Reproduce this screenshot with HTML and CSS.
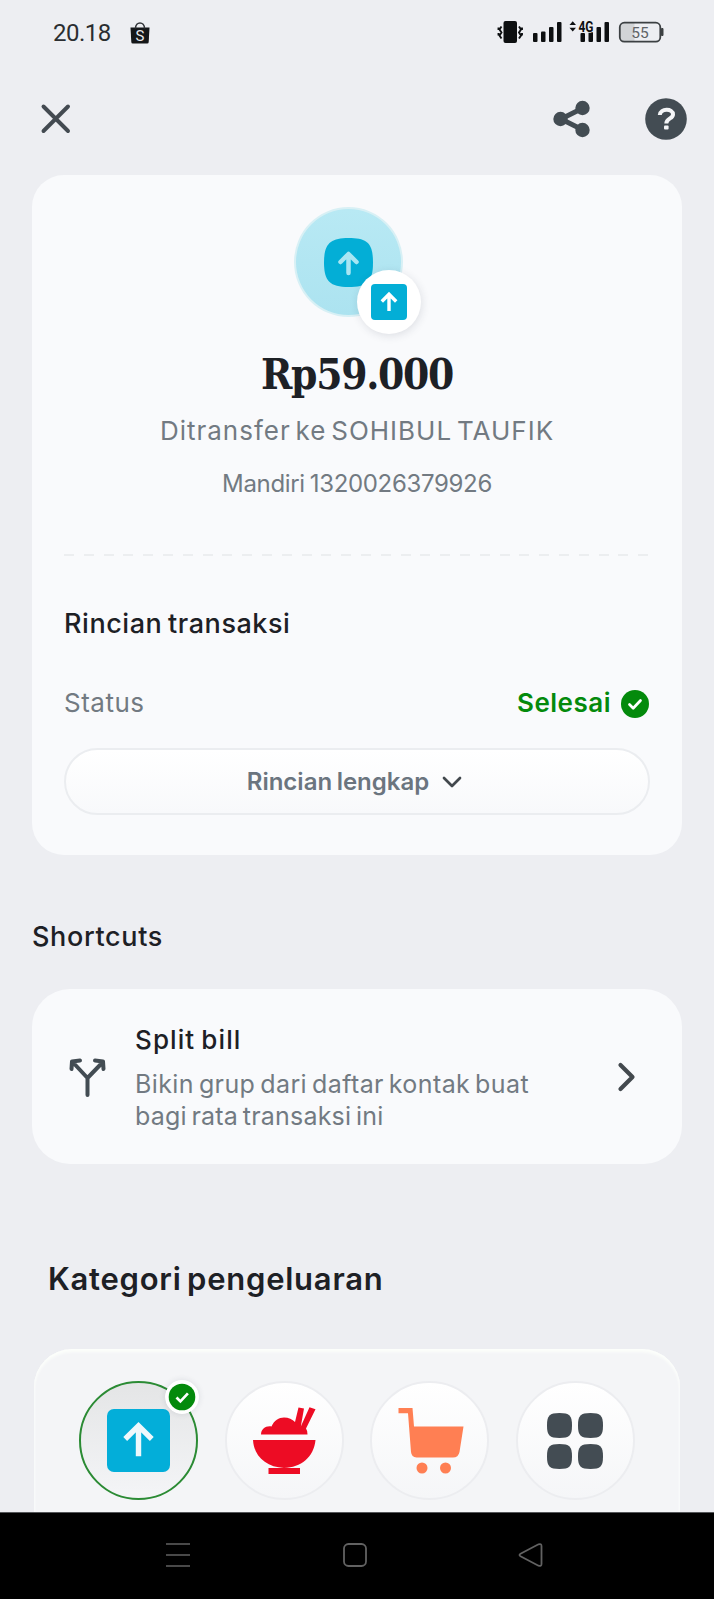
FILE: index.html
```html
<!DOCTYPE html>
<html lang="id">
<head>
<meta charset="utf-8">
<title>Rincian transaksi</title>
<link rel="stylesheet" href="styles.css">
</head>
<body>
<div class="screen">
  <div class="statusbar">
    <span class="clock">20.18</span>
    <svg class="bag" width="20" height="22" viewBox="0 0 20 22"><path d="M0.5 5.5h19l-.8 14.5q-.1 1.500-1.500 1.500h-14.400q-1.400 0-1.500-1.500z" fill="#151719"/><path d="M5.500 6.500C5.500-1 14.500-1 14.500 6.500" fill="none" stroke="#33363a" stroke-width="1.500"/><text class="bag-letter" x="10" y="18.500" text-anchor="middle">S</text></svg>
    <svg class="signals" width="170" height="30" viewBox="0 0 170 30">
      <g fill="#0d0f11">
        <rect x="6.500" y="7" width="13.500" height="22" rx="2"/>
        <rect x="36" y="19" width="4.500" height="9" rx="1"/><rect x="44" y="17.500" width="4.500" height="10.500" rx="1"/><rect x="52" y="13" width="4.500" height="15" rx="1"/><rect x="60" y="8" width="4.500" height="20" rx="1"/>
        <rect x="83.500" y="19" width="4.500" height="9" rx="1"/><rect x="91.500" y="18" width="4.500" height="10" rx="1"/><rect x="99.500" y="13" width="4.500" height="15" rx="1"/><rect x="107.500" y="8" width="4.500" height="20" rx="1"/>
        <path d="M72.500 11l3.200-3.800L79 11zM72.500 13.800h6.500l-3.300 3.800z"/>
      </g>
      <path d="M4.500 12.500l-2 3 2 3-2 3 2 3M1.500 13.500v2.500M1.500 19v2.500M22 12.500l2 3-2 3 2 3-2 3M25 13.500v2.500M25 19v2.500" fill="none" stroke="#0d0f11" stroke-width="1.900"/>
      <text class="net" x="81.500" y="17.500" textLength="15" lengthAdjust="spacingAndGlyphs">4G</text>
      <path d="M126.500 9h11v18h-11q-3.500 0-3.500-3.500v-11q0-3.500 3.500-3.500z" fill="#d2d4d7"/>
      <rect x="122.800" y="8.700" width="40.500" height="19" rx="4.500" fill="none" stroke="#3c4043" stroke-width="1.800"/>
      <path d="M164.500 14.500h1.500v7h-1.500z" fill="#3c4043" stroke="#3c4043"/>
      <text class="batt" x="143" y="23.800" text-anchor="middle">55</text>
    </svg>
  </div>

  <div class="topbar">
    <svg class="close" width="32" height="32" viewBox="0 0 32 32"><path d="M3.500 3.500l24.500 24.500M28 3.500L3.500 28" stroke="#434a51" stroke-width="3.900" stroke-linecap="round"/></svg>
    <svg class="share" width="38" height="38" viewBox="0 0 38 38" fill="#434c53"><path d="M30 8L8 19l22 11" fill="none" stroke="#434c53" stroke-width="5"/><circle cx="29.500" cy="8" r="7.200"/><circle cx="7.500" cy="19" r="7.200"/><circle cx="29.500" cy="30" r="7.200"/></svg>
    <svg class="help" width="42" height="42" viewBox="0 0 42 42"><circle cx="21" cy="21" r="20.800" fill="#434c53"/><path d="M14.800 17C15.200 10.200 28 10 28 16.400C28 20.800 21.500 20 21.300 25.500" fill="none" stroke="#f4f5f7" stroke-width="4"/><rect x="19" y="27.400" width="4.600" height="4" rx="1" fill="#f4f5f7"/></svg>
  </div>

  <main class="content">
    <section class="card receipt">
      <div class="hero">
        <svg class="hero-icon" width="49" height="49" viewBox="0 0 49 49"><path d="M24.500 0C43 0 49 5 49 24.500S43 49 24.500 49 0 43 0 24.500 6 0 24.500 0z" fill="#03aed6"/><path d="M24.500 35V17M16.500 24l8-8 8 8" fill="none" stroke="#a8e6f3" stroke-width="4.500" stroke-linecap="round" stroke-linejoin="round"/></svg>
        <div class="hero-badge"><svg width="36" height="36" viewBox="0 0 36 36"><rect width="36" height="36" rx="4" fill="#03aed6"/><path d="M18 27V11M10.800 17.500L18 10.200l7.200 7.300" fill="none" stroke="#fff" stroke-width="3.400"/></svg></div>
      </div>
      <div class="amount">Rp59.000</div>
      <div class="recipient">Ditransfer ke SOHIBUL TAUFIK</div>
      <div class="account">Mandiri 1320026379926</div>
      <div class="divider"></div>
      <h2 class="heading">Rincian transaksi</h2>
      <div class="row">
        <span class="label">Status</span>
        <span class="done">Selesai</span>
        <svg class="check" width="28" height="28" viewBox="0 0 28 28"><circle cx="14" cy="14" r="14" fill="#048a0c"/><path d="M8.500 14.500l3.700 3.700 7.300-7.700" fill="none" stroke="#fff" stroke-width="2.700" stroke-linecap="round" stroke-linejoin="round"/></svg>
      </div>
      <div class="more"><span class="more-text">Rincian lengkap</span><svg width="20" height="14" viewBox="0 0 20 14"><path d="M2 3l8 8 8-8" fill="none" stroke="#42484d" stroke-width="2.700" stroke-linecap="round" stroke-linejoin="round"/></svg></div>
    </section>

    <h2 class="shortcuts-title">Shortcuts</h2>
    <section class="card shortcut">
      <svg class="split" width="40" height="42" viewBox="0 0 40 42"><path d="M19.500 38V21L6 6.500M19.500 21L33.500 6.500M3.500 12L4 4.500l8-1M35.500 12L35 4.500l-8-1" fill="none" stroke="#434c53" stroke-width="4" stroke-linejoin="round" stroke-linecap="round"/></svg>
      <div class="shortcut-body">
        <div class="shortcut-name">Split bill</div>
        <div class="shortcut-desc"><span class="line-a">Bikin grup dari daftar kontak buat</span><br><span class="line-b">bagi rata transaksi ini</span></div>
      </div>
      <svg class="next" width="20" height="32" viewBox="0 0 20 32"><path d="M3.500 4l12 12-12 12" fill="none" stroke="#43494e" stroke-width="4.200" stroke-linecap="round" stroke-linejoin="round"/></svg>
    </section>

    <h2 class="category-title">Kategori pengeluaran</h2>
    <section class="categories">
      <div class="cat selected">
        <svg width="63" height="63" viewBox="0 0 64 64"><rect width="64" height="64" rx="7" fill="#03aed9"/><path d="M32 48V17M18.500 30.500L32 17l13.500 13.500" fill="none" stroke="#eef8fc" stroke-width="5.500"/></svg>
        <svg class="tick" width="34" height="34" viewBox="0 0 34 34"><circle cx="17" cy="17" r="17" fill="#fff"/><circle cx="17" cy="17" r="13.300" fill="#048a0c"/><path d="M11.500 17.500l3.900 3.900 7.500-8" fill="none" stroke="#fff" stroke-width="2.700"/></svg>
      </div>
      <div class="cat">
        <svg width="64" height="70" viewBox="0 0 64 70"><path d="M1 34h62.500C62 51 49 61.500 32 62C15 61.500 2 51 1 34zM16.500 62h31.500v6h-31.500zM9 28.500C9 23 14 19.500 19.500 20.500C22 14.500 27 11.500 32 11.500c4.500 0 8.500 1.800 11 4.500L46.500 1.500l5.500 1L48.800 20.500L57.500 1.200l6 2L54 22.500q1.500 2 1.500 6z" fill="#ed0c24"/></svg>
      </div>
      <div class="cat">
        <svg class="cart" width="66" height="68" viewBox="0 0 66 68" fill="#ff7f53"><path d="M.5 1H14.500L16 19.500H65.500L61.500 45q-1.200 5.500-6.500 5.500H18.500q-5-.5-5.500-5.500L10 6.200H.5z"/><circle cx="24" cy="61" r="5.500"/><circle cx="47.500" cy="61" r="5.500"/></svg>
      </div>
      <div class="cat">
        <svg width="58" height="58" viewBox="0 0 58 58" fill="#434c53"><path id="tile" d="M13.500 1C23.500 1 26 3.500 26 13.500S23.500 26 13.500 26 1 23.500 1 13.500 3.500 1 13.500 1z"/><use href="#tile" x="31"/><use href="#tile" y="31"/><use href="#tile" x="31" y="31"/></svg>
      </div>
    </section>
  </main>

  <nav class="navbar">
    <svg width="26" height="26" viewBox="0 0 26 26"><path d="M1 2h24M1 13h24M1 24h24" stroke="#626262" stroke-width="1.700"/></svg>
    <svg width="26" height="26" viewBox="0 0 26 26"><rect x="2" y="2" width="22" height="22" rx="4.500" fill="none" stroke="#626262" stroke-width="1.800"/></svg>
    <svg width="26" height="26" viewBox="0 0 26 26"><path d="M2.500 11.800L20.500 2.300q3-1 3 1.700v18q0 2.700-3 1.700L2.500 14.200q-2-1.200 0-2.400z" fill="none" stroke="#626262" stroke-width="1.800"/></svg>
  </nav>
</div>
</body>
</html>
```
FILE: styles.css
```css
* { box-sizing: border-box; }
body { margin: 0; background: #edeef2; font-family: Inter, "Liberation Sans", sans-serif; color: #1d2025; }
svg { display: block; flex: none; }
h2 { margin: 0; font-weight: 500; }
.screen { width: 714px; height: 1599px; display: flex; flex-direction: column; overflow: hidden; }

.statusbar { height: 64px; display: flex; align-items: flex-start; padding: 0 47px 0 53px; }
.clock { font: 24px/28px Roboto, sans-serif; color: #2b2e31; width: 77px; padding-top: 18.5px; letter-spacing: -0.5px; }
.bag { margin-top: 21.5px; }
.bag-letter { font: 15px Roboto, sans-serif; fill: #e8e9ec; }
.signals { margin: 14px 0 0 auto; }
.net { font: bold 14.5px Roboto, sans-serif; fill: #0d0f11; stroke: #edeef2; stroke-width: 1.5px; paint-order: stroke; }
.batt { font: 15.5px Roboto, sans-serif; fill: #606366; }

.topbar { height: 111px; display: flex; align-items: center; padding: 0 27px 2px 40px; }
.share { margin-left: auto; margin-right: 54px; }

.content { flex: 1; padding: 0 32px; min-height: 0; }
.card { background: #f9fafc; }
.receipt { height: 680px; border-radius: 32px; padding: 32px 32px 0; display: flex; flex-direction: column; }
.hero { position: relative; width: 109px; height: 110px; border-radius: 50%; margin-left: 230px; background: linear-gradient(#b8e9f4, #ace3f0); border: 2px solid #d8f0f5; display: flex; align-items: center; justify-content: center; }
.hero-badge { position: absolute; left: 61px; top: 61px; width: 64px; height: 64px; border-radius: 50%; background: #fff; box-shadow: 1px 2px 8px rgba(40, 50, 70, .13); display: flex; align-items: center; justify-content: center; }
.amount { margin-top: 33px; text-align: center; font: bold 42px/50px "DejaVu Serif Condensed", "DejaVu Serif", serif; font-stretch: condensed; letter-spacing: -1.3px; }
.recipient { margin-top: 13px; text-align: center; font-size: 26px; line-height: 36px; color: #727a82; white-space: nowrap; letter-spacing: 1px; word-spacing: -3.5px; }
.account { margin-top: 19px; text-align: center; font-size: 24px; line-height: 32px; color: #727a82; white-space: nowrap; letter-spacing: -0.33px; word-spacing: -1.5px; }
.divider { margin-top: 54px; height: 2px; flex: none; background: repeating-linear-gradient(90deg, #eceef0 0 10px, transparent 10px 19.8px); }
.heading { margin-top: 50px; font-size: 27px; line-height: 36px; letter-spacing: .55px; word-spacing: -2px; }
.row { margin-top: 43px; display: flex; align-items: center; height: 36px; font-size: 26px; line-height: 36px; letter-spacing: .5px; }
.label { color: #727a82; }
.done { margin-left: auto; color: #048a0c; font-weight: 600; }
.check { margin: 2px 1px 0 10px; }
.more { margin-top: 27px; height: 67px; border: 2px solid #ebedf0; border-radius: 34px; background: linear-gradient(#fff, #f8f9fb); padding-right: 5px; display: flex; align-items: center; justify-content: center; gap: 13px; font-size: 24px; font-weight: 600; color: #6b757f; }
.more-text { word-spacing: -1.5px; }

.shortcuts-title { margin-top: 64px; font-size: 27px; line-height: 36px; letter-spacing: .65px; }
.shortcut { margin-top: 34px; height: 175px; border-radius: 38px; display: flex; padding: 35px 45px 0 36px; }
.split { margin-top: 33px; }
.shortcut-body { margin-left: 27px; white-space: nowrap; }
.shortcut-name { font-size: 26px; line-height: 32px; font-weight: 500; letter-spacing: 1.1px; word-spacing: -2px; }
.shortcut-desc { margin-top: 12px; font-size: 25px; line-height: 32px; color: #727a82; }
.line-a { letter-spacing: .4px; word-spacing: -2.5px; }
.line-b { letter-spacing: .2px; word-spacing: -2.5px; }
.next { margin: 37px 0 0 auto; }

.category-title { margin: 95px 0 0 16px; font-size: 31px; line-height: 40px; font-weight: 600; letter-spacing: .75px; word-spacing: -3px; }
.categories { margin: 50px 2px 0; height: 163px; border-radius: 38px 38px 0 0; background: #f4f5f7; box-shadow: inset 0 3px 3px #fcfefb, inset 0 0 3px #fafbfc; display: flex; justify-content: space-between; padding: 32px 45px 0; }
.cat { position: relative; width: 119px; height: 119px; border-radius: 50%; border: 2px solid #ecedf0; background: linear-gradient(#fff, #f5f6f8); display: flex; align-items: center; justify-content: center; }
.selected { border-color: #2b8b34; background: linear-gradient(#e4e5e6, #f4f5f7); }
.tick { position: absolute; left: 84px; top: -3px; border-radius: 50%; box-shadow: 0 0 6px rgba(40, 50, 70, .12); }
.cart { margin-left: 2px; }

.navbar { height: 87px; background: #000; border-top: 1px solid #55575a; display: flex; justify-content: space-between; padding: 29px 170px 0 165px; }
```
